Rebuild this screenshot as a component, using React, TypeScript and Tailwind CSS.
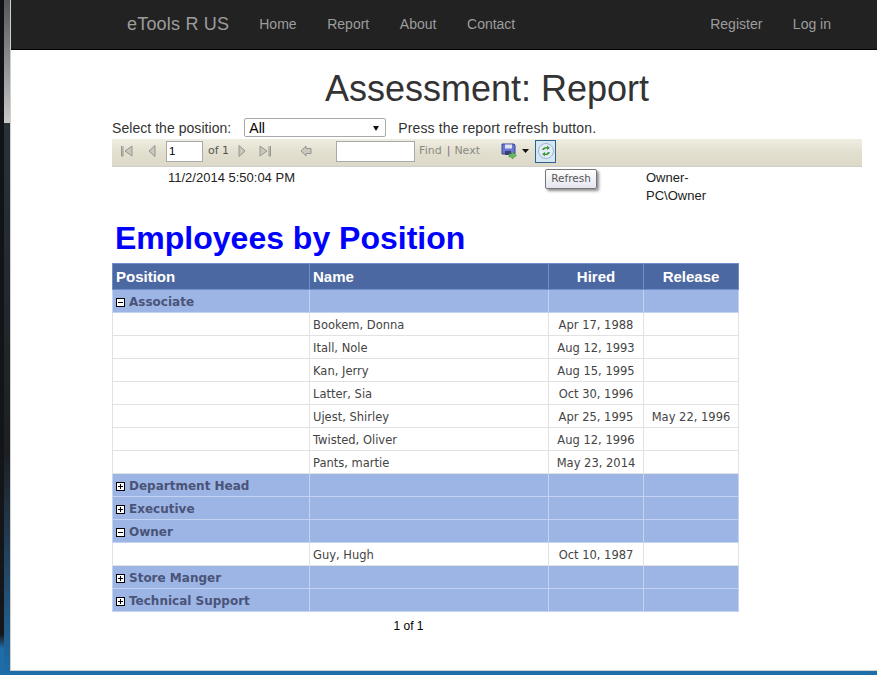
const navLeft = ["Home", "Report", "About", "Contact"];
const navRight = ["Register", "Log in"];

type Row = { kind: "group"; name: string; open: boolean } | { kind: "emp"; name: string; hired: string; release?: string };

const rows: Row[] = [
  { kind: "group", name: "Associate", open: true },
  { kind: "emp", name: "Bookem, Donna", hired: "Apr 17, 1988" },
  { kind: "emp", name: "Itall, Nole", hired: "Aug 12, 1993" },
  { kind: "emp", name: "Kan, Jerry", hired: "Aug 15, 1995" },
  { kind: "emp", name: "Latter, Sia", hired: "Oct 30, 1996" },
  { kind: "emp", name: "Ujest, Shirley", hired: "Apr 25, 1995", release: "May 22, 1996" },
  { kind: "emp", name: "Twisted, Oliver", hired: "Aug 12, 1996" },
  { kind: "emp", name: "Pants, martie", hired: "May 23, 2014" },
  { kind: "group", name: "Department Head", open: false },
  { kind: "group", name: "Executive", open: false },
  { kind: "group", name: "Owner", open: true },
  { kind: "emp", name: "Guy, Hugh", hired: "Oct 10, 1987" },
  { kind: "group", name: "Store Manger", open: false },
  { kind: "group", name: "Technical Support", open: false },
];

const Toggle = ({ open }: { open: boolean }) => (
  <svg width="9" height="9" viewBox="0 0 9 9" className="shrink-0 mr-[4px]">
    <rect x="0.5" y="0.5" width="8" height="8" fill="#fff" stroke="#000" />
    <path d="M2 4.5H7" stroke="#000" />
    {!open && <path d="M4.5 2V7" stroke="#000" />}
  </svg>
);

const Nav = ({ d }: { d: string }) => (
  <svg width="14" height="14" viewBox="0 0 14 14" className="shrink-0">
    <path d={d} fill="#c9c8be" stroke="#96968f" />
  </svg>
);

const ReportTable = () => (
  <table className="border-collapse table-fixed w-[626px] font-['DejaVu_Sans',sans-serif] text-[11.5px] text-[#444]">
    <colgroup>
      <col className="w-[197px]" />
      <col className="w-[239px]" />
      <col className="w-[95px]" />
      <col className="w-[95px]" />
    </colgroup>
    <thead>
      <tr className="h-[26px] bg-[#4c68a2] text-white text-[15px] font-['Liberation_Sans',sans-serif]">
        <th className="border border-[#6f8fc8] text-left pl-[3px] pt-[2px] font-bold">Position</th>
        <th className="border border-[#6f8fc8] text-left pl-[3px] pt-[2px] font-bold">Name</th>
        <th className="border border-[#6f8fc8] text-center pt-[2px] font-bold">Hired</th>
        <th className="border border-[#6f8fc8] text-center pt-[2px] font-bold">Release</th>
      </tr>
    </thead>
    <tbody>
      {rows.map((row) =>
        row.kind === "group" ? (
          <tr key={row.name} className="h-[23px] bg-[#9db5e4]">
            <td className="border border-[#c3d4f2] pl-[3px] pt-[2px] font-bold text-[12px] text-[#4a5378]">
              <div className="flex items-center">
                <Toggle open={row.open} />
                {row.name}
              </div>
            </td>
            <td className="border border-[#c3d4f2]"></td>
            <td className="border border-[#c3d4f2]"></td>
            <td className="border border-[#c3d4f2]"></td>
          </tr>
        ) : (
          <tr key={row.name} className="h-[23px] bg-white">
            <td className="border border-[#e2e2e2]"></td>
            <td className="border border-[#e2e2e2] pl-[3px] pt-[4px]">{row.name}</td>
            <td className="border border-[#e2e2e2] text-center pt-[4px]">{row.hired}</td>
            <td className="border border-[#e2e2e2] text-center pt-[4px]">{row.release}</td>
          </tr>
        )
      )}
    </tbody>
  </table>
);

const Toolbar = () => (
  <div className="relative h-[28px] w-[750px] flex items-center pb-[3px] bg-gradient-to-b from-[#f0eee2] via-[#e2dfcf] to-[#dcd9c8] border-b border-[#cfcfca] font-['DejaVu_Sans',sans-serif] text-[11px] text-[#555]">
    <div className="ml-[8px] flex">
      <Nav d="M1.5 2V12M3 2V12H1.5M12 2V12L5 7Z" />
    </div>
    <div className="ml-[11px] flex">
      <Nav d="M10 1.5V12.5L4 7Z" />
    </div>
    <input
      readOnly
      value="1"
      className="ml-[7px] w-[37px] h-[21px] bg-white border border-[#a9a9a9] pl-[2px] text-[11.5px] text-black font-['Liberation_Sans',sans-serif] outline-none"
    />
    <span className="ml-[5px]">of 1</span>
    <div className="ml-[7px] flex">
      <Nav d="M3 1.5V12.5L9 7Z" />
    </div>
    <div className="ml-[8px] flex">
      <Nav d="M2 2V12L9 7ZM11 2V12M12.5 2V12H11" />
    </div>
    <div className="ml-[27px] flex">
      <Nav d="M7 2V4.5H12V9.5H7V12L2 7Z" />
    </div>
    <input readOnly className="ml-[23px] w-[79px] h-[21px] bg-white border border-[#a9a9a9] outline-none" />
    <span className="ml-[4px] text-[#8a8a84]">Find</span>
    <span className="ml-[5px] text-[#8a6a8a]">|</span>
    <span className="ml-[4px] text-[#8a8a84]">Next</span>
    <svg width="17" height="17" viewBox="0 0 17 17" className="ml-[21px]">
      <path d="M1 1H13L14 2V11H1Z" fill="#6a75d4" stroke="#3a4699" />
      <rect x="4" y="1.5" width="7" height="4" fill="#dfe4f5" />
      <rect x="4" y="8" width="6" height="4" fill="#39406e" />
      <path d="M8 11H11V9L15.5 12.5L11 16V14H8Z" fill="#6cb765" stroke="#4b9a4b" strokeWidth="0.7" />
    </svg>
    <svg width="7" height="4" viewBox="0 0 7 4" className="ml-[4px]">
      <path d="M0 0H7L3.5 4Z" fill="#111" />
    </svg>
    <div className="ml-[6px] w-[21px] h-[23px] flex items-center justify-center bg-[#d5e8f2] border border-[#2c628b]">
      <svg width="18" height="18" viewBox="0 0 18 18">
        <circle cx="9" cy="9" r="7.5" fill="#e6edf8" stroke="#9db2d6" />
        <path d="M5 8C5.5 5.5 8 4.5 10 5V3.5L13 6L10 8V6.5C8.5 6.2 7.5 7 7 8Z" fill="#3f9a3d" />
        <path d="M13 10C12.5 12.5 10 13.5 8 13V14.5L5 12L8 10V11.5C9.5 11.8 10.5 11 11 10Z" fill="#3f9a3d" />
      </svg>
    </div>
    <div className="absolute left-[433px] top-[30px] w-[52px] h-[20px] flex items-center justify-center bg-gradient-to-b from-white to-[#e4e5f0] border border-[#767676] rounded-[2px] shadow-[2px_2px_3px_rgba(0,0,0,0.45)] text-[10.5px] text-[#575757] z-10">
      Refresh
    </div>
  </div>
);

export default function App() {
  return (
    <div className="flex h-[675px] w-[877px] overflow-hidden bg-[#1d6da8] font-['Liberation_Sans',sans-serif]">
      <div className="w-[10px] shrink-0 flex">
        <div className="w-[4px] bg-gradient-to-b from-[#101216] via-[#14161a] via-[94%] to-[#1d6da8] to-[96%]"></div>
        <div className="w-[6px] flex flex-col">
          <div className="h-[123px] bg-gradient-to-b from-[#55585a] to-[#c9c9c9]"></div>
          <div className="flex-1 bg-gradient-to-b from-[#2a3238] via-[#1c2024] via-[60%] to-[#1d6da8]"></div>
        </div>
      </div>
      <div className="flex-1 flex flex-col h-[671px] bg-white border-l border-b border-[#cfcfcf]">
        <nav className="h-[50px] shrink-0 flex items-center bg-[#222] border-b border-black text-[14px] text-[#9d9d9d]">
          <span className="ml-[116px] text-[18px] tracking-[0.2px]">eTools R US</span>
          <div className="ml-[30px] flex gap-[30.6px]">
            {navLeft.map((item) => (
              <span key={item}>{item}</span>
            ))}
          </div>
          <div className="ml-auto mr-[46px] flex gap-[30.5px]">
            {navRight.map((item) => (
              <span key={item}>{item}</span>
            ))}
          </div>
        </nav>
        <main className="ml-[101px] w-[750px] text-[#333] text-[14px]">
          <h1 className="mt-[18px] h-[42px] text-center text-[36px] leading-[42px] font-normal text-[#333]">
            Assessment: Report
          </h1>
          <div className="mt-[9px] h-[19px] flex items-center">
            <span className="tracking-[0.05px]">Select the position:</span>
            <div className="ml-[13px] mb-[2px] w-[142px] h-[19px] flex items-center justify-between border border-[#a9a9a9] rounded-[2px] pl-[4px] pr-[6px] pt-[2px] text-black">
              All
              <svg width="6" height="5" viewBox="0 0 6 5">
                <path d="M0 0H6L3 5Z" fill="#111" />
              </svg>
            </div>
            <span className="ml-[12px] tracking-[0.13px]">Press the report refresh button.</span>
          </div>
          <div className="mt-[1px]">
            <Toolbar />
          </div>
          <div className="h-[36px] flex text-[13px] leading-[18px] text-[#222] pt-[2px]">
            <span className="ml-[56px] w-[478px]">11/2/2014 5:50:04 PM</span>
            <span className="w-[90px]">Owner-PC\Owner</span>
          </div>
          <h2 className="mt-[16px] ml-[3px] h-[38px] text-[32px] leading-[38px] font-bold text-[#0000ff]">
            Employees by Position
          </h2>
          <div className="mt-[6px]">
            <ReportTable />
          </div>
          <div className="w-[593px] mt-[5px] text-center text-[12px] text-black">1 of 1</div>
        </main>
      </div>
    </div>
  );
}
